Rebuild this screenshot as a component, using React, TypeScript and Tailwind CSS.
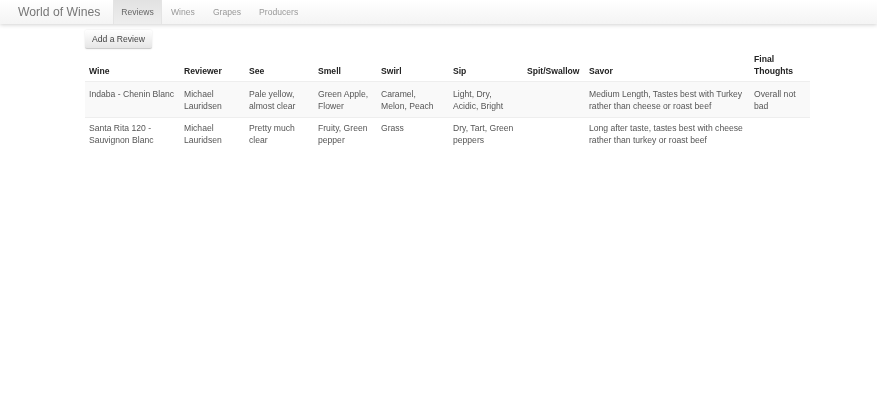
const rows = [
  ["Indaba - Chenin Blanc", "Michael Lauridsen", "Pale yellow, almost clear", "Green Apple, Flower", "Caramel,\nMelon, Peach", "Light, Dry,\nAcidic, Bright", "", "Medium Length, Tastes best with Turkey rather than cheese or roast beef", "Overall not bad"],
  ["Santa Rita 120 - Sauvignon Blanc", "Michael Lauridsen", "Pretty much clear", "Fruity, Green pepper", "Grass", "Dry, Tart, Green peppers", "", "Long after taste, tastes best with cheese rather than turkey or roast beef", ""],
];
const heads = ["Wine", "Reviewer", "See", "Smell", "Swirl", "Sip", "Spit/Swallow", "Savor", "Final Thoughts"];
const widths = ["w-[95px]", "w-[65px]", "w-[69px]", "w-[63px]", "w-[72px]", "w-[74px]", "w-[62px]", "w-[165px]", "w-[60px]"];

export default function App() {
  return (
    <div className="min-h-[400px] bg-white font-['Liberation_Sans',Arial,sans-serif] text-[8.6px] leading-[12px] text-[#333] blur-[0.6px]">
      <nav className="flex h-[24px] bg-gradient-to-b from-white to-[#f4f4f4] shadow-[0_1px_4px_rgba(0,0,0,0.18)]">
        <span className="ml-[18px] w-[95px] text-[12.2px] leading-[24px] text-[#777]">World of Wines</span>
        <span className="w-[49px] border-x border-[#e4e4e4] bg-gradient-to-b from-[#e2e2e2] to-[#eeeeee] text-center leading-[24px] text-[#666]">Reviews</span>
        <span className="ml-[9px] leading-[24px] text-[#999]">Wines</span>
        <span className="ml-[18px] leading-[24px] text-[#999]">Grapes</span>
        <span className="ml-[18px] leading-[24px] text-[#999]">Producers</span>
      </nav>
      <div className="ml-[85px] w-[725px]">
        <button className="mt-[6px] block h-[19px] w-[67px] rounded-[2px] border-b border-[#ccc] bg-gradient-to-b from-white to-[#e6e6e6] text-[8.6px] text-[#444] shadow-[0_0_2px_rgba(0,0,0,0.12)]">
          Add a Review
        </button>
        <table className="mt-[3px] w-[725px] table-fixed border-collapse">
          <thead>
            <tr>
              {heads.map((h, i) => (
                <th key={h} className={`${widths[i]} px-[4px] pb-[4px] pt-[1px] text-left align-bottom font-bold whitespace-normal text-[#222]`}>{h}</th>
              ))}
            </tr>
          </thead>
          <tbody>
            {rows.map((r, ri) => (
              <tr key={ri} className={ri === 0 ? "border-y border-[#eeeeee] bg-[#f9f9f9]" : ""}>
                {r.map((c, i) => (
                  <td key={i} className={`px-[4px] align-top whitespace-pre-line text-[#555] ${ri === 0 ? "pb-[5px] pt-[6px]" : "pb-[5px] pt-[4px]"}`}>{c}</td>
                ))}
              </tr>
            ))}
          </tbody>
        </table>
      </div>
    </div>
  );
}
